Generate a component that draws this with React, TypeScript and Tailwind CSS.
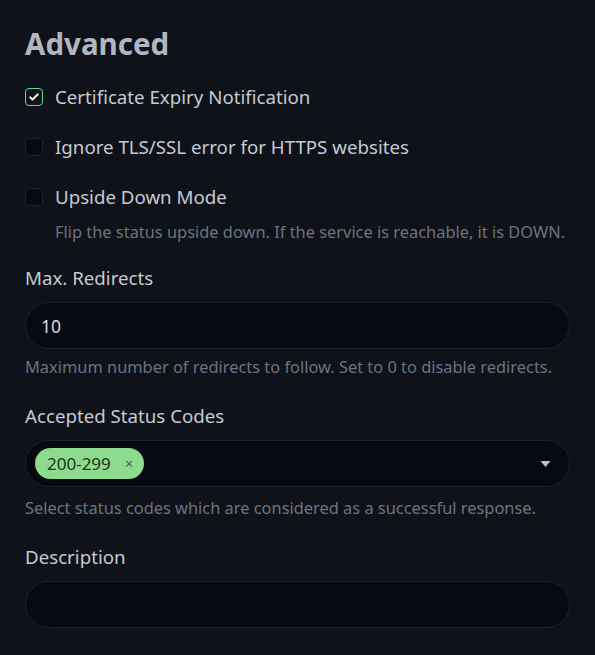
import { useState } from 'react';

const font = { fontFamily: '"Noto Sans", "Open Sans", sans-serif' };

function Check({ checked, label, hint }: { checked?: boolean; label: string; hint?: string }) {
  return (
    <div className="flex flex-col">
      <label className="flex items-center gap-[12px]">
        <span
          className={`flex h-[18px] w-[18px] shrink-0 items-center justify-center rounded-[4px] border ${
            checked ? 'border-[#5cdd8b] bg-[#10141b]' : 'border-[#1d2230] bg-[#070a10]'
          }`}
        >
          {checked && (
            <svg viewBox="0 0 16 16" className="h-[12px] w-[12px]" fill="none">
              <path d="M3 8.5l3 3 7-7" stroke="#fff" strokeWidth="2.6" strokeLinecap="round" strokeLinejoin="round" />
            </svg>
          )}
        </span>
        <span className="text-[18.7px] leading-[24px] text-[#c5cad3]">{label}</span>
      </label>
      {hint && <p className="ml-[30px] mt-[13px] text-[16.4px] leading-[20px] text-[#6c7280]">{hint}</p>}
    </div>
  );
}

export default function App() {
  const [redirects, setRedirects] = useState('10');

  return (
    <div className="min-h-[655px] bg-[#0f1219] px-[25px] pt-[26px]" style={font}>
      <h2 className="text-[29.5px] font-bold leading-[36px] text-[#b1b6c1]">Advanced</h2>

      <div className="mt-[23px] flex flex-col gap-[26px]">
        <Check checked label="Certificate Expiry Notification" />
        <Check label="Ignore TLS/SSL error for HTTPS websites" />
        <Check
          label="Upside Down Mode"
          hint="Flip the status upside down. If the service is reachable, it is DOWN."
        />
      </div>

      {/* Max redirects */}
      <div className="mt-[24px]">
        <label className="block text-[18.7px] leading-[24px] text-[#c5cad3]">Max. Redirects</label>
        <input
          value={redirects}
          onChange={(e) => setRedirects(e.target.value)}
          className="mt-[12px] h-[47px] w-full rounded-full border border-[#1c2130] bg-[#070a10] px-[15px] text-[17.5px] text-[#d6dae1] outline-none"
        />
        <p className="mt-[8px] text-[16.4px] leading-[20px] text-[#6c7280]">
          Maximum number of redirects to follow. Set to 0 to disable redirects.
        </p>
      </div>

      {/* Accepted status codes */}
      <div className="mt-[27px]">
        <label className="block text-[18.7px] leading-[24px] text-[#c5cad3]">Accepted Status Codes</label>
        <div className="mt-[12px] flex h-[47px] w-full items-center rounded-full border border-[#1c2130] bg-[#070a10] pl-[9px] pr-[18px]">
          <span className="flex h-[31px] items-center gap-[14px] rounded-full bg-[#8ddb8e] pl-[12px] pr-[11px] text-[17px] text-[#1d3621]">
            200-299
            <span className="text-[15px] text-[#4a6b4c]">×</span>
          </span>
          <div className="flex-1" />
          <svg viewBox="0 0 10 6" className="h-[6px] w-[11px]">
            <path d="M0 0h10L5 6z" fill="#b9bec7" />
          </svg>
        </div>
        <p className="mt-[11px] text-[16.4px] leading-[20px] text-[#6c7280]">
          Select status codes which are considered as a successful response.
        </p>
      </div>

      {/* Description */}
      <div className="mt-[27px]">
        <label className="block text-[18.7px] leading-[24px] text-[#c5cad3]">Description</label>
        <input className="mt-[12px] h-[47px] w-full rounded-full border border-[#1c2130] bg-[#070a10] px-[15px] text-[17.5px] text-[#d6dae1] outline-none" />
      </div>
    </div>
  );
}
